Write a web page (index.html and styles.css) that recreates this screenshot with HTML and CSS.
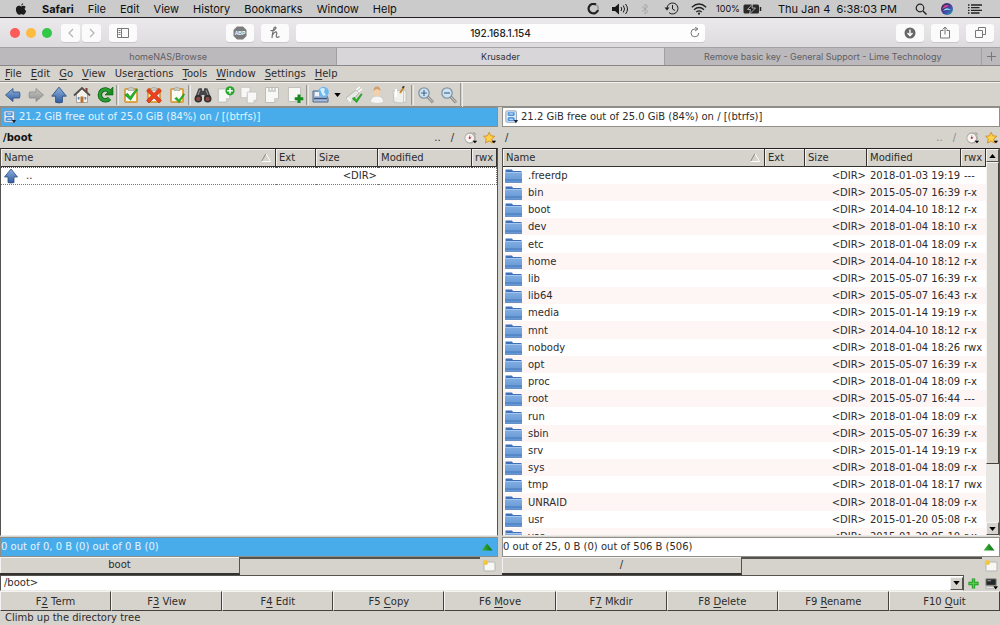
FILE: index.html
```html
<!DOCTYPE html>
<html lang="en">
<head>
<meta charset="utf-8">
<title>Krusader</title>
<link rel="stylesheet" href="styles.css">
</head>
<body>
<svg class="defs" aria-hidden="true">
  <defs>
    <linearGradient id="blue" x1="0" y1="0" x2="0" y2="1"><stop offset="0" stop-color="#8fb3e2"/><stop offset="1" stop-color="#2f5c9c"/></linearGradient>
    <linearGradient id="folderFill" x1="0" y1="0" x2="0" y2="1"><stop offset="0" stop-color="#82aee2"/><stop offset="1" stop-color="#6395d3"/></linearGradient>
    <linearGradient id="grey" x1="0" y1="0" x2="0" y2="1"><stop offset="0" stop-color="#c4c4c2"/><stop offset="1" stop-color="#929290"/></linearGradient>
    <linearGradient id="green" x1="0" y1="0" x2="1" y2="0"><stop offset="0" stop-color="#3dbb3d"/><stop offset="1" stop-color="#0d6e12"/></linearGradient>
    <linearGradient id="siriFill" x1="0" y1="0" x2="1" y2="1"><stop offset="0" stop-color="#32202f"/><stop offset=".5" stop-color="#4a3fa0"/><stop offset="1" stop-color="#1b9fc0"/></linearGradient>
  </defs>
  <symbol id="folder" viewBox="0 0 18 16">
    <path d="M1 1.500h6.500l1 1.500h8.500v5H1z" fill="#3f72b8"/>
    <path d="M.5 4h17v10.500h-17z" fill="url(#folderFill)"/>
    <path d="M.5 4.500h17" stroke="#a5c6ee"/>
    <path d="M.5 12h17" stroke="#3a6db3" stroke-width=".8"/>
    <path d="M.5 14.500h17" stroke="#5583bf" stroke-width=".8"/>
  </symbol>
  <symbol id="up" viewBox="0 0 16 16">
    <path d="M8 1l6.500 8H11v5.500q-3 1-6 0V9H1.500z" fill="url(#blue)" stroke="#2d4f80" stroke-width=".8"/>
  </symbol>
  <symbol id="check" viewBox="0 0 16 16">
    <path d="M1 8l3-2 3 4 7-9 1.500 1L7.500 14z" fill="#22b422" stroke="#0d7a12" stroke-width=".6"/>
  </symbol>
  <symbol id="clip" viewBox="0 0 18 18">
    <rect x="2.500" y="2.500" width="13" height="14" rx="1" fill="#e8a93c" stroke="#c99040" stroke-width=".7"/>
    <rect x="4" y="4" width="10" height="11" fill="#fbfbf6"/>
    <path d="M6 2.500q3-3 6 0v2H6z" fill="#c9c9c4" stroke="#8e8e88" stroke-width=".5"/>
  </symbol>
  <symbol id="page" viewBox="0 0 16 18">
    <path d="M1.500 1.500h13v11l-4 4h-9z" fill="#f8f8f6" stroke="#bcbcb8"/>
    <path d="M14.500 12.500h-4v4z" fill="#d4d4d0" stroke="#bcbcb8" stroke-width=".6"/>
  </symbol>
  <symbol id="disk" viewBox="0 0 16 16">
    <rect x="1" y="1" width="12" height="13" rx="1.500" fill="#e6edf5" stroke="#7e93ad"/>
    <path d="M3 2.500h8v3.500l-2 1.500L11 9v3.500H3V9l2-1.500L3 6z" fill="#4e95dc"/>
    <path d="M5 4.500h4M4 7.500h6M5 10.500h4" stroke="#fff"/>
    <path d="M10 11.500h5L12.500 15z" fill="#223"/>
  </symbol>
  <symbol id="history" viewBox="0 0 16 16">
    <circle cx="7" cy="8" r="6.500" fill="#aeaba8"/><circle cx="6.500" cy="8" r="5" fill="#f7f4f2"/>
    <path d="M11 1.500l2.500 2.500" stroke="#77736f"/><path d="M6.500 8V5M6.500 8l2-1" stroke="#b76a70"/><circle cx="6.500" cy="8" r="1.200" fill="#c23140"/>
    <path d="M10 11h5l-2.500 3z"/>
  </symbol>
  <symbol id="star" viewBox="0 0 16 16">
    <path d="M7 1.500l2 4 4.500.5-3.500 3 1 4.800-4-2.400-4.200 2.400 1-4.800L.7 6l4.500-.5z" fill="#ffd24c" stroke="#cf8b24"/>
    <path d="M10 11h5l-2.500 3z"/>
  </symbol>
  <symbol id="newtab" viewBox="0 0 14 14">
    <rect x="2" y="3" width="11" height="9" rx="1" fill="#f7f7f5" stroke="#b5b5b0"/><circle cx="3.500" cy="3.500" r="2.500" fill="#f4c63a"/>
  </symbol>
  <symbol id="greentri" viewBox="0 0 12 8"><path d="M6 .5l5.500 7H.5z" fill="url(#green)"/></symbol>
  <symbol id="sort" viewBox="0 0 12 12"><path d="M1.500 9.500L6 1.500" stroke="#8b8b86" fill="none"/><path d="M6 1.500l4.500 8h-9" stroke="#fff" fill="none"/></symbol>
  <symbol id="lens" viewBox="0 0 18 18">
    <path d="M10.500 10.500l5.500 6" stroke="#8f8f8c" stroke-width="3"/><path d="M10.500 10.500l5.500 6" stroke="#d0d0cc"/>
    <circle cx="7" cy="7" r="5.200" fill="#cfe2f0" stroke="#8195a5" stroke-width="1.300"/>
  </symbol>
</svg>

<div class="screen">
  <header class="mac">
    <nav class="mac-menu" aria-label="System menu">
      <svg class="apple" viewBox="0 0 12 13"><path d="M8.500 0q.1 2-2.300 3Q6 1 8.500 0zM6.200 3.700C7 3.700 7.500 3.100 8.700 3.100q1.500 0 2.400 1.300-2.500 1.800.5 4.400C11 10.800 10 12.600 8.800 12.600c-1 0-1.200-.5-2.400-.5s-1.500.5-2.300.5C2.300 12.600.5 9.500.5 7c0-2.500 1.400-3.900 3.200-3.900 1.200 0 1.800.6 2.500.6z" fill="#1c1c1c"/></svg>
      <b>Safari</b><span>File</span><span>Edit</span><span>View</span><span>History</span><span>Bookmarks</span><span>Window</span><span>Help</span>
    </nav>
    <div class="mac-tray">
      <svg width="13" height="12" viewBox="0 0 13 12"><path d="M9 1.600A4.800 4.800 0 1 0 11 7" fill="none" stroke="#222" stroke-width="2.200"/><path d="M9 1.600A4.800 4.800 0 0 1 11 7" fill="none" stroke="#999" stroke-width="1.500"/></svg>
      <svg width="17" height="12" viewBox="0 0 17 12"><path d="M0 4h3l4-3.500v11L3 8H0z" fill="#1a1a1a"/><path d="M9 4q1.500 2 0 4M11.300 2.500q2.500 3.500 0 7M13.500 1q4 5 0 10" fill="none" stroke="#1a1a1a"/></svg>
      <svg width="8" height="12" viewBox="0 0 8 12"><path d="M1 3.500l6 5-3 2.500V1l3 2.500-6 5" fill="none" stroke="#aaa"/></svg>
      <svg class="tm" width="15" height="13" viewBox="0 0 15 13"><path d="M3 6.500a5.500 5.500 0 1 1 2 4.200" fill="none" stroke="#222"/><path d="M.5 5.500h5L3 8.500z" fill="#222"/><path d="M8.500 3v4l2.500 1.500" fill="none" stroke="#222"/></svg>
      <svg width="16" height="12" viewBox="0 0 16 12"><path d="M.8 4.300q7.200-6.500 14.400 0M3 6.800q5-4.500 10 0M5.300 9q2.700-2.300 5.400 0" fill="none" stroke="#222" stroke-width="1.300"/><circle cx="8" cy="10.700" r="1.100" fill="#222"/></svg>
      <span class="batt-text">100%</span>
      <svg width="19" height="10" viewBox="0 0 19 10"><rect x=".5" y=".5" width="15.500" height="9" rx="1.500" fill="#2a2a2a"/><path d="M17.500 3v4" stroke="#222" stroke-width="1.500"/><path d="M9.500 0L4.500 5.500h3L6.500 10l6-6h-3.500z" fill="#222" stroke="#ccc" stroke-width=".8"/></svg>
      <span class="clock">Thu Jan 4 &nbsp;6:38:03 PM</span>
      <svg class="find" width="12" height="12" viewBox="0 0 12 12"><circle cx="5" cy="5" r="3.800" fill="none" stroke="#222" stroke-width="1.200"/><path d="M8 8l3.500 3.500" stroke="#222" stroke-width="1.400"/></svg>
      <svg class="siri" width="12" height="12" viewBox="0 0 12 12"><circle cx="6" cy="6" r="6" fill="url(#siriFill)"/><path d="M1 6q3-6 7-3-3 1-7 3z" fill="#d8439d"/><path d="M2 8q3-5 8-1-4-1-8 1z" fill="#8ae8f5"/></svg>
      <svg class="list" width="14" height="10" viewBox="0 0 14 10"><path d="M0 1h1.500M0 3.700h1.500M0 6.300h1.500M0 9h1.500M3 1h11M3 3.700h8.500M3 6.300h11M3 9h8.500" stroke="#222" stroke-width="1.300"/></svg>
    </div>
  </header>

  <div class="safari">
    <div class="safari-left">
      <div class="lights"><i class="red"></i><i class="amber"></i><i class="lime"></i></div>
      <div class="pair">
        <button class="sbtn small" aria-label="Back"><svg width="6" height="10" viewBox="0 0 6 10"><path d="M5 1L1 5l4 4" fill="none" stroke="#b4b4b4" stroke-width="1.200"/></svg></button>
        <button class="sbtn small" aria-label="Forward"><svg width="6" height="10" viewBox="0 0 6 10"><path d="M1 1l4 4-4 4" fill="none" stroke="#b4b4b4" stroke-width="1.200"/></svg></button>
      </div>
      <button class="sbtn" aria-label="Sidebar"><svg width="12" height="10" viewBox="0 0 12 10"><path d="M.5.5h11v9H.5zM4.500.5v9M1.500 2.500h2M1.500 4.500h2M1.500 6.500h2" fill="none" stroke="#777"/></svg></button>
      <div class="ext">
        <button class="sbtn" aria-label="Ad blocker"><svg width="14" height="14" viewBox="0 0 14 14"><path d="M4 .5h6L13.500 4v6L10 13.500H4L.5 10V4z" fill="#7c7c7c"/><text x="7" y="9" class="abp">ABP</text></svg></button>
        <button class="sbtn" aria-label="Honey"><svg width="12" height="13" viewBox="0 0 12 13"><path d="M1.500 4.500Q5.500 5 7 2.200 6.800.5 5.300 1.500 3.800 4 3 12M3 9.500q3-4.500 4.500-3.500.8.800-.3 4 .2 2.500 3.300.5" fill="none" stroke="#707070" stroke-width="1.200"/></svg></button>
      </div>
    </div>
    <div class="url">
      <input type="text" aria-label="Address" value="192.168.1.154">
      <button class="reload" aria-label="Reload"><svg width="10" height="11" viewBox="0 0 10 11"><path d="M8.800 6A3.900 3.900 0 1 1 5 2h2" fill="none" stroke="#777"/><path d="M5 0l3 2-3 2" fill="none" stroke="#777"/></svg></button>
    </div>
    <div class="safari-right">
      <button class="sbtn" aria-label="Downloads"><svg width="12" height="12" viewBox="0 0 12 12"><circle cx="6" cy="6" r="5.500" fill="#666"/><path d="M6 2.500v6M3.500 6L6 8.700 8.500 6" fill="none" stroke="#fff" stroke-width="1.400"/></svg></button>
      <button class="sbtn" aria-label="Share"><svg width="10" height="13" viewBox="0 0 10 13"><path d="M3.500 4.500h-3v7.500h9V4.500h-3M5 8.500V1M2.500 3.500L5 1l2.500 2.500" fill="none" stroke="#777"/></svg></button>
      <button class="sbtn" aria-label="Show tabs"><svg width="11" height="11" viewBox="0 0 11 11"><path d="M.5 3.500h7v7h-7zM3.500 3.500v-3h7v7h-3" fill="none" stroke="#777"/></svg></button>
    </div>
  </div>

  <div class="tabs">
    <button class="tab">homeNAS/Browse</button>
    <button class="tab active">Krusader</button>
    <button class="tab">Remove basic key - General Support - Lime Technology</button>
    <button class="tab-add" aria-label="New tab"><svg width="9" height="9" viewBox="0 0 9 9"><path d="M4.500 0v9M0 4.500h9" stroke="#777"/></svg></button>
  </div>

  <nav class="kmenu" aria-label="Krusader menu">
    <span><u>F</u>ile</span><span><u>E</u>dit</span><span><u>G</u>o</span><span><u>V</u>iew</span><span>User<u>a</u>ctions</span><span><u>T</u>ools</span><span><u>W</u>indow</span><span><u>S</u>ettings</span><span><u>H</u>elp</span>
  </nav>

  <div class="toolbar">
    <button aria-label="Back"><svg viewBox="0 0 18 18"><path d="M1.500 9L9 2.500V6h6.500q1 3 0 6H9v3.500z" fill="url(#blue)" stroke="#2d4f80" stroke-width=".8"/></svg></button>
    <button aria-label="Forward"><svg viewBox="0 0 18 18"><path d="M16.500 9L9 2.500V6H2.500q-1 3 0 6H9v3.500z" fill="url(#grey)" stroke="#8a8a88" stroke-width=".8"/></svg></button>
    <button aria-label="Up"><svg viewBox="0 0 16 16"><use href="#up"/></svg></button>
    <button aria-label="Home"><svg viewBox="0 0 18 18"><path d="M3.500 8L9 3l5.500 5v8.500h-11z" fill="#f5f2ea" stroke="#8d8a82" stroke-width=".7"/><path d="M12.500 2h2v4h-2z" fill="#8a3a2a"/><path d="M1 9.500L9 2l8 7.500" fill="none" stroke="#55524e" stroke-width="1.800"/><path d="M7.500 10.500h3v6h-3z" fill="#b9702b"/><path d="M4.800 11h1.700v2.500H4.800zM11.500 11h1.700v2.500h-1.700z" fill="#5b86bd"/></svg></button>
    <button aria-label="Reload"><svg viewBox="0 0 18 18"><path d="M13.500 12.500a5.500 5.500 0 1 1 .2-7" fill="none" stroke="#0b5e12" stroke-width="4.400"/><path d="M17 1v8H9z" fill="#178a20" stroke="#0b5e12" stroke-width=".6"/><path d="M13.500 12.500a5.500 5.500 0 1 1 .2-7" fill="none" stroke="#2a9d30" stroke-width="2.800"/></svg></button>
    <span class="sep"></span>
    <button aria-label="Select group"><svg viewBox="0 0 18 18"><use href="#clip"/><use href="#check" x="0" y="2" width="18" height="14"/></svg></button>
    <button aria-label="Unselect group"><svg viewBox="0 0 18 18"><use href="#clip"/><path d="M1.500 5L4 2.500l5 4.700 5-4.700L16.500 5l-4.700 4.500 4.700 5L14 17l-5-5-5 5-2.500-2.500 4.700-5z" fill="#e8431e" stroke="#b82a10" stroke-width=".6"/></svg></button>
    <button aria-label="Invert selection"><svg viewBox="0 0 18 18"><use href="#clip"/><use href="#check" x="5" y="7" width="13" height="11"/></svg></button>
    <span class="sep"></span>
    <button aria-label="Search"><svg viewBox="0 0 18 18"><path d="M4.500 2.500L7.500 2l1 3h1l1-3 3 .5 3.500 9-3.500 2.500-3-2V9h-3v3l-3 2L1 11.500z" fill="#45464a"/><circle cx="4.300" cy="12.700" r="3.800" fill="#303034"/><circle cx="13.700" cy="12.700" r="3.800" fill="#303034"/><circle cx="4.300" cy="12.900" r="2.200" fill="#8d4a3c"/><circle cx="13.700" cy="12.900" r="2.200" fill="#8d4a3c"/><path d="M6 4L4 9M12 4l2 5" stroke="#999"/></svg></button>
    <button aria-label="New file"><svg viewBox="0 0 18 18"><use href="#page" x="0" y="1" width="14" height="17"/><circle cx="13" cy="4.800" r="4.600" fill="#2aa52e"/><path d="M13 2v5.600M10.200 4.800h5.600" stroke="#fff" stroke-width="1.500"/></svg></button>
    <button aria-label="Copy"><svg viewBox="0 0 18 18"><use href="#page" x="0" y="0" width="11" height="13"/><use href="#page" x="6" y="5" width="12" height="13"/></svg></button>
    <button aria-label="Paste"><svg viewBox="0 0 18 18"><use href="#page" x="1" y="0" width="16" height="18"/><path d="M5 3h2M8 3h2M11 3h2M5 5h8" stroke="#aaa"/></svg></button>
    <button aria-label="Add"><svg viewBox="0 0 18 18"><use href="#page" x="1" y="0" width="15" height="17"/><path d="M13 8.500v8.500M8.700 12.800h8.600" stroke="#178a1d" stroke-width="3"/></svg></button>
    <span class="sep"></span>
    <button aria-label="Remote connection"><svg viewBox="0 0 18 18"><path d="M1 5h11l4 7v4H1z" fill="#a9bdd8" stroke="#51698d"/><path d="M2 12.500h13" stroke="#3b5580" stroke-width="1.500"/><circle cx="11.500" cy="6" r="5.300" fill="#6cb8ee"/><path d="M8 3q3-2 5 0l-1 3 2 3q-3 2-4-1z" fill="#d7eefb"/><path d="M3 6h4v4H3z" fill="#f0f3f8"/></svg></button>
    <button class="drop" aria-label="Connections"><svg viewBox="0 0 8 5"><path d="M0 0h8L4 5z"/></svg></button>
    <button aria-label="Synchronize"><svg viewBox="0 0 18 18"><path d="M1 12L11 4l3 3-8 9z" fill="#e8e8e5" stroke="#a2a29e" stroke-width=".7"/><path d="M11 4l4-3M13 6l4-3M2 12l4 4" stroke="#fff" stroke-width="1.300"/><use href="#check" x="6" y="7" width="12" height="11"/></svg></button>
    <button aria-label="User"><svg viewBox="0 0 18 18"><path d="M2.500 16.500q0-6.500 6.500-6.500t6.500 6.500q-6.500 2-13 0z" fill="#f6f6f4" stroke="#c4c4c0" stroke-width=".7"/><path d="M5.700 5q0-4 3.300-4t3.300 4q0 5-3.300 5.500Q5.700 10 5.700 5z" fill="#f3cfaa"/><path d="M5.500 5q0-4.500 3.500-4.500T12.500 5q-2-2-3.500-2T5.500 5z" fill="#cf9e6c"/></svg></button>
    <button aria-label="Edit"><svg viewBox="0 0 18 18"><path d="M2 5l10-1 3 1v11q-6 2-12 0z" fill="#f0f0ed" stroke="#bdbdb8" stroke-width=".8"/><path d="M12.500 5v11" stroke="#ccc"/><path d="M9 7l4-6" stroke="#c48b36" stroke-width="2"/><path d="M11.500 2L13 0" stroke="#333" stroke-width="1.500"/><path d="M5 3v8" stroke="#fff" stroke-width="2"/></svg></button>
    <span class="sep"></span>
    <button aria-label="Zoom in"><svg viewBox="0 0 18 18"><use href="#lens"/><path d="M7 4v6M4 7h6" stroke="#466a8c" stroke-width="1.200"/></svg></button>
    <button aria-label="Zoom out"><svg viewBox="0 0 18 18"><use href="#lens"/><path d="M4 7h6" stroke="#466a8c" stroke-width="1.200"/></svg></button>
    <span class="sep"></span>
  </div>

  <main class="panes">
    <section class="pane focused">
      <div class="info"><svg class="i14" viewBox="0 0 16 16"><use href="#disk"/></svg><span>21.2 GiB free out of 25.0 GiB (84%) on / [(btrfs)]</span></div>
      <div class="path"><b>/boot</b><div class="path-tools"><span>..</span><span>/</span><svg class="i14" viewBox="0 0 16 16"><use href="#history"/></svg><svg class="i14" viewBox="0 0 16 16"><use href="#star"/></svg></div></div>
      <div class="list-frame">
        <div class="scrollarea">
          <table>
            <colgroup><col><col class="c-ext"><col class="c-size"><col class="c-mod"><col class="c-rwx"></colgroup>
            <thead><tr><th><div class="th-name">Name<svg class="sort" viewBox="0 0 12 12"><use href="#sort"/></svg></div></th><th>Ext</th><th>Size</th><th>Modified</th><th class="t-rwx">rwx</th></tr></thead>
            <tbody><tr class="current"><td><div class="name"><svg class="upicon" viewBox="0 0 16 16"><use href="#up"/></svg>..</div></td><td></td><td class="size">&lt;DIR&gt;</td><td></td><td></td></tr></tbody>
          </table>
        </div>
      </div>
      <div class="totals"><span>0 out of 0, 0 B (0) out of 0 B (0)</span><svg class="tri" viewBox="0 0 12 8"><use href="#greentri"/></svg></div>
      <div class="ptabs"><button class="ptab">boot</button><div class="ptab-rest"></div><button class="ptab-new" aria-label="New tab"><svg viewBox="0 0 14 14"><use href="#newtab"/></svg></button></div>
    </section>

    <section class="pane">
      <div class="info"><svg class="i14" viewBox="0 0 16 16"><use href="#disk"/></svg><span>21.2 GiB free out of 25.0 GiB (84%) on / [(btrfs)]</span></div>
      <div class="path"><span>/</span><div class="path-tools dim"><span>..</span><span>/</span><svg class="i14" viewBox="0 0 16 16"><use href="#history"/></svg><svg class="i14" viewBox="0 0 16 16"><use href="#star"/></svg></div></div>
      <div class="list-frame">
        <div class="scrollarea">
          <table class="striped">
            <colgroup><col><col class="c-ext"><col class="c-size"><col class="c-mod"><col class="c-rwx"></colgroup>
            <thead><tr><th><div class="th-name">Name<svg class="sort" viewBox="0 0 12 12"><use href="#sort"/></svg></div></th><th>Ext</th><th>Size</th><th>Modified</th><th class="t-rwx">rwx</th></tr></thead>
            <tbody>
              <tr><td><div class="name"><svg class="folder" viewBox="0 0 18 16"><use href="#folder"/></svg>.freerdp</div></td><td></td><td class="size">&lt;DIR&gt;</td><td>2018-01-03 19:19</td><td>---</td></tr>
              <tr><td><div class="name"><svg class="folder" viewBox="0 0 18 16"><use href="#folder"/></svg>bin</div></td><td></td><td class="size">&lt;DIR&gt;</td><td>2015-05-07 16:39</td><td>r-x</td></tr>
              <tr><td><div class="name"><svg class="folder" viewBox="0 0 18 16"><use href="#folder"/></svg>boot</div></td><td></td><td class="size">&lt;DIR&gt;</td><td>2014-04-10 18:12</td><td>r-x</td></tr>
              <tr><td><div class="name"><svg class="folder" viewBox="0 0 18 16"><use href="#folder"/></svg>dev</div></td><td></td><td class="size">&lt;DIR&gt;</td><td>2018-01-04 18:10</td><td>r-x</td></tr>
              <tr><td><div class="name"><svg class="folder" viewBox="0 0 18 16"><use href="#folder"/></svg>etc</div></td><td></td><td class="size">&lt;DIR&gt;</td><td>2018-01-04 18:09</td><td>r-x</td></tr>
              <tr><td><div class="name"><svg class="folder" viewBox="0 0 18 16"><use href="#folder"/></svg>home</div></td><td></td><td class="size">&lt;DIR&gt;</td><td>2014-04-10 18:12</td><td>r-x</td></tr>
              <tr><td><div class="name"><svg class="folder" viewBox="0 0 18 16"><use href="#folder"/></svg>lib</div></td><td></td><td class="size">&lt;DIR&gt;</td><td>2015-05-07 16:39</td><td>r-x</td></tr>
              <tr><td><div class="name"><svg class="folder" viewBox="0 0 18 16"><use href="#folder"/></svg>lib64</div></td><td></td><td class="size">&lt;DIR&gt;</td><td>2015-05-07 16:43</td><td>r-x</td></tr>
              <tr><td><div class="name"><svg class="folder" viewBox="0 0 18 16"><use href="#folder"/></svg>media</div></td><td></td><td class="size">&lt;DIR&gt;</td><td>2015-01-14 19:19</td><td>r-x</td></tr>
              <tr><td><div class="name"><svg class="folder" viewBox="0 0 18 16"><use href="#folder"/></svg>mnt</div></td><td></td><td class="size">&lt;DIR&gt;</td><td>2014-04-10 18:12</td><td>r-x</td></tr>
              <tr><td><div class="name"><svg class="folder" viewBox="0 0 18 16"><use href="#folder"/></svg>nobody</div></td><td></td><td class="size">&lt;DIR&gt;</td><td>2018-01-04 18:26</td><td>rwx</td></tr>
              <tr><td><div class="name"><svg class="folder" viewBox="0 0 18 16"><use href="#folder"/></svg>opt</div></td><td></td><td class="size">&lt;DIR&gt;</td><td>2015-05-07 16:39</td><td>r-x</td></tr>
              <tr><td><div class="name"><svg class="folder" viewBox="0 0 18 16"><use href="#folder"/></svg>proc</div></td><td></td><td class="size">&lt;DIR&gt;</td><td>2018-01-04 18:09</td><td>r-x</td></tr>
              <tr><td><div class="name"><svg class="folder" viewBox="0 0 18 16"><use href="#folder"/></svg>root</div></td><td></td><td class="size">&lt;DIR&gt;</td><td>2015-05-07 16:44</td><td>---</td></tr>
              <tr><td><div class="name"><svg class="folder" viewBox="0 0 18 16"><use href="#folder"/></svg>run</div></td><td></td><td class="size">&lt;DIR&gt;</td><td>2018-01-04 18:09</td><td>r-x</td></tr>
              <tr><td><div class="name"><svg class="folder" viewBox="0 0 18 16"><use href="#folder"/></svg>sbin</div></td><td></td><td class="size">&lt;DIR&gt;</td><td>2015-05-07 16:39</td><td>r-x</td></tr>
              <tr><td><div class="name"><svg class="folder" viewBox="0 0 18 16"><use href="#folder"/></svg>srv</div></td><td></td><td class="size">&lt;DIR&gt;</td><td>2015-01-14 19:19</td><td>r-x</td></tr>
              <tr><td><div class="name"><svg class="folder" viewBox="0 0 18 16"><use href="#folder"/></svg>sys</div></td><td></td><td class="size">&lt;DIR&gt;</td><td>2018-01-04 18:09</td><td>r-x</td></tr>
              <tr><td><div class="name"><svg class="folder" viewBox="0 0 18 16"><use href="#folder"/></svg>tmp</div></td><td></td><td class="size">&lt;DIR&gt;</td><td>2018-01-04 18:17</td><td>rwx</td></tr>
              <tr><td><div class="name"><svg class="folder" viewBox="0 0 18 16"><use href="#folder"/></svg>UNRAID</div></td><td></td><td class="size">&lt;DIR&gt;</td><td>2018-01-04 18:09</td><td>r-x</td></tr>
              <tr><td><div class="name"><svg class="folder" viewBox="0 0 18 16"><use href="#folder"/></svg>usr</div></td><td></td><td class="size">&lt;DIR&gt;</td><td>2015-01-20 05:08</td><td>r-x</td></tr>
              <tr><td><div class="name"><svg class="folder" viewBox="0 0 18 16"><use href="#folder"/></svg>var</div></td><td></td><td class="size">&lt;DIR&gt;</td><td>2015-01-20 05:10</td><td>r-x</td></tr>
            </tbody>
          </table>
        </div>
        <div class="scrollbar">
          <button class="sb-btn" aria-label="Scroll up"><svg viewBox="0 0 8 5"><path d="M4 0l4 5H0z"/></svg></button>
          <div class="sb-track"><div class="sb-thumb"></div></div>
          <button class="sb-btn" aria-label="Scroll down"><svg viewBox="0 0 8 5"><path d="M0 0h8L4 5z"/></svg></button>
        </div>
      </div>
      <div class="totals"><span>0 out of 25, 0 B (0) out of 506 B (506)</span><svg class="tri" viewBox="0 0 12 8"><use href="#greentri"/></svg></div>
      <div class="ptabs"><button class="ptab">/</button><div class="ptab-rest"></div><button class="ptab-new" aria-label="New tab"><svg viewBox="0 0 14 14"><use href="#newtab"/></svg></button></div>
    </section>
  </main>

  <div class="cmd">
    <div class="combo">
      <input type="text" aria-label="Command line" value="/boot&gt;">
      <button class="sb-btn" aria-label="Command history"><svg viewBox="0 0 8 5"><path d="M0 0h8L4 5z"/></svg></button>
    </div>
    <button class="cmd-btn" aria-label="Add"><svg viewBox="0 0 14 14"><path d="M7 1.500v11M1.500 7h11" stroke="#229a22" stroke-width="3.600"/><path d="M7 2.500v9M2.500 7h9" stroke="#55cf4c" stroke-width="1.600"/></svg></button>
    <button class="cmd-btn" aria-label="Terminal"><svg viewBox="0 0 14 14"><path d="M1 2h11v7H1z" fill="#25282a" stroke="#8a8a88"/><path d="M2.500 4h4" stroke="#aaa"/><path d="M1 10.500h9v2H1z" fill="#f2f2f0" stroke="#888" stroke-width=".5"/><path d="M9 10h5l-2.500 3.500z"/></svg></button>
  </div>

  <div class="fkeys">
    <button>F<u>2</u> Term</button><button>F<u>3</u> View</button><button>F<u>4</u> Edit</button><button>F5 <u>C</u>opy</button><button>F6 <u>M</u>ove</button><button>F<u>7</u> Mkdir</button><button>F8 <u>D</u>elete</button><button>F9 <u>R</u>ename</button><button>F10 <u>Q</u>uit</button>
  </div>
  <footer class="status">Climb up the directory tree</footer>
</div>
</body>
</html>
```
FILE: styles.css
```css
* { box-sizing: border-box; }

body {
  margin: 0;
  background: #d6d3cd;
  color: #2c2c2c;
  font: 10px/14px "DejaVu Sans", sans-serif;
}

button, input {
  margin: 0;
  padding: 0;
  border: 0;
  background: none;
  color: inherit;
  font: inherit;
}

button { display: flex; align-items: center; justify-content: center; }
svg { display: block; flex: none; }
u { text-underline-offset: 2px; }
.defs { position: absolute; width: 0; height: 0; }

.screen { display: flex; flex-direction: column; height: 100vh; overflow: hidden; }
.screen > * { flex: none; }

/* System menu bar */
.mac {
  display: flex;
  justify-content: space-between;
  align-items: center;
  height: 18px;
  padding: 0 18px 0 15px;
  border-bottom: 1px solid #222;
  background: #cbcbcb;
  color: #111;
  font: 11px/16px Inter, sans-serif;
  white-space: nowrap;
}
.mac-menu { display: flex; align-items: center; gap: 14px; }
.mac-menu b { margin-left: 1px; }
.apple { width: 12px; height: 12px; }
.mac-tray { display: flex; align-items: center; gap: 12px; }
.mac-tray .tm { margin-left: 3px; }
.batt-text { margin-left: -3px; margin-right: -9px; font-size: 9px; }
.clock { margin-left: 4px; margin-right: 4px; }
.mac-tray .siri { margin: 0 3px 0 2px; }
.mac-tray .find { margin-left: 2px; }

/* Browser toolbar */
.safari {
  display: grid;
  grid-template-columns: 296fr 409fr 295fr;
  align-items: center;
  height: 29px;
  background: linear-gradient(#ebe9ec, #dedbdf);
}
.safari-left, .safari-right { display: flex; align-items: center; }
.safari-left { padding: 0 7px 0 10px; }
.safari-right { justify-content: flex-end; gap: 7px; padding-right: 6px; }
.lights { display: flex; gap: 6px; margin-right: 9px; }
.lights i { width: 10px; height: 10px; border-radius: 50%; }
.red { background: #fb5c57; }
.amber { background: #fdbb40; }
.lime { background: #33c748; }
.pair { display: flex; gap: 2px; margin-right: 8px; }
.ext { display: flex; gap: 7px; margin-left: auto; }
.sbtn {
  width: 28px;
  height: 18px;
  border-radius: 3px;
  background: #fbfbfb;
  box-shadow: 0 1px 0 #c9c7ca;
}
.sbtn.small { width: 19px; }
.abp { fill: #fff; font: bold 5px "Liberation Sans", sans-serif; text-anchor: middle; }
.url {
  display: flex;
  align-items: center;
  height: 18px;
  padding: 0 3px 0 17px;
  border-radius: 3px;
  background: #fdfdfd;
  box-shadow: 0 1px 0 #c9c7ca;
}
.url input { flex: 1; min-width: 0; color: #222; font: 500 10px/16px Inter, sans-serif; text-align: center; }
.reload { width: 14px; height: 14px; }

.tabs {
  display: flex;
  height: 19px;
  border-top: 1px solid #a5a2a5;
  border-bottom: 1px solid #888688;
  background: #bcb9bd;
}
.tab {
  flex: 317 1 0;
  border-right: 1px solid #a3a0a4;
  color: #5f5d60;
  font: 500 9px/16px Roboto, sans-serif;
}
.tab:first-child { flex-grow: 337; }
.tab.active { flex-grow: 327; background: #d9d6da; color: #333; }
.tab { font-family: Inter, sans-serif; font-weight: 400; }
.tab-add { width: 18px; }

/* Application menu and toolbar */
.kmenu {
  display: flex;
  align-items: center;
  gap: 9px;
  height: 16px;
  padding: 0 5px;
  border-bottom: 1px solid #8e8c87;
}
.toolbar {
  display: flex;
  align-items: center;
  height: 25px;
  padding-left: 1px;
  border-top: 1px solid #f3f2f0;
  border-bottom: 1px solid #8e8c87;
}
.toolbar button { width: 23px; height: 22px; }
.toolbar svg { width: 18px; height: 18px; }
.toolbar .drop { width: 10px; }
.toolbar .drop svg { width: 7px; height: 4px; }
.sep { width: 3px; height: 20px; border-left: 1px solid #97958f; border-right: 1px solid #eeece8; }
.sep:last-child { height: 24px; }

/* File panes */
.screen > .panes {
  display: grid;
  grid-template-columns: 1fr 1fr;
  gap: 4px;
  flex: 1 1 0;
  min-height: 0;
}
.pane { display: flex; flex-direction: column; min-width: 0; min-height: 0; }
.info, .totals {
  display: flex;
  align-items: center;
  height: 20px;
  border: 1px solid #908e88;
  background: #fff;
  white-space: nowrap;
}
.info { gap: 2px; padding-left: 2px; }
.totals { justify-content: space-between; padding-right: 4px; margin-top: 1px; }
.focused .info, .focused .totals { background: #48aceb; color: #e4f3fd; }
.i14 { width: 14px; height: 14px; }
.tri { width: 12px; height: 8px; }
.path {
  display: flex;
  align-items: center;
  justify-content: space-between;
  height: 21px;
  padding: 0 1px 0 3px;
}
.path b { color: #111; }
.path-tools { display: flex; align-items: center; gap: 5px; }
.path-tools span { margin-right: 5px; }
.dim span { color: #8b8983; }

.list-frame {
  display: flex;
  flex: 1 1 0;
  min-height: 0;
  border: 1px solid #55534f;
  border-top-color: #222;
  border-bottom-color: #eceae6;
  background: #fff;
}
.scrollarea { flex: 1; min-width: 0; overflow: hidden; }
table { width: 100%; border-collapse: separate; border-spacing: 0; table-layout: fixed; }
.c-ext { width: 40px; }
.c-size { width: 62px; }
.c-mod { width: 94px; }
.c-rwx { width: 25px; }
th {
  height: 18px;
  padding: 0 3px;
  border-right: 1px solid #33322f;
  border-bottom: 1px solid #33322f;
  background: #d6d3cd;
  box-shadow: inset 1px 1px #f3f2f0;
  font-weight: normal;
  text-align: left;
}
th.t-rwx { text-align: center; padding: 0; }
.th-name { display: flex; align-items: center; justify-content: space-between; }
.sort { width: 12px; height: 12px; }
td { height: 17px; padding: 1px 1px 0 3px; white-space: nowrap; line-height: 16px; }
tr:nth-child(5n) td { height: 18px; }
.striped tr:nth-child(even) td { background: #fef5f5; }
.size { text-align: right; }
.name { display: flex; align-items: center; gap: 5px; height: 16px; }
td:first-child { padding-left: 1px; }
.folder { width: 19px; height: 16px; }
.upicon { width: 18px; height: 16px; margin-right: 1px; }
.current td { padding-top: 0; border-top: 1px dotted #555; border-bottom: 1px dotted #777; }
.current td:last-child { border-right: 1px dotted #777; }

.scrollbar { display: flex; flex-direction: column; width: 13px; background: #e9e7e4; }
.sb-btn {
  flex: none;
  width: 13px;
  height: 13px;
  border: 1px solid;
  border-color: #f5f4f2 #55534f #55534f #f5f4f2;
  background: #d6d3cd;
}
.sb-btn svg { width: 7px; height: 4px; }
.sb-track { flex: 1; }
.sb-thumb {
  height: calc(100% - 58px);
  border: 1px solid;
  border-color: #f5f4f2 #44423f #44423f #f5f4f2;
  background: #d6d3cd;
}

.ptabs { display: flex; height: 18px; }
.ptab {
  width: 240px;
  border-right: 1px solid #55534f;
  border-bottom: 2px solid #33322f;
  box-shadow: inset 1px 1px #f3f2f0;
}
.ptab-rest { flex: 1; border-top: 2px solid #55534f; }
.ptab-new { width: 18px; }
.ptab-new svg { width: 14px; height: 14px; }

/* Command line, function keys, status */
.cmd { display: flex; align-items: center; height: 16px; }
.combo {
  display: flex;
  align-items: center;
  flex: 1;
  height: 16px;
  border: 1px solid #55534f;
  border-bottom-color: #eceae6;
  background: #fff;
}
.combo input { flex: 1; min-width: 0; padding-left: 3px; }
.cmd-btn { width: 18px; height: 16px; }
.cmd-btn svg { width: 13px; height: 13px; }
.fkeys { display: grid; grid-template-columns: repeat(9, 1fr); height: 20px; }
.fkeys button {
  display: block;
  padding-top: 1px;
  border: 1px solid;
  border-color: #f5f4f2 #44423f #44423f #f5f4f2;
}
.status { height: 14px; padding-left: 5px; }
```
